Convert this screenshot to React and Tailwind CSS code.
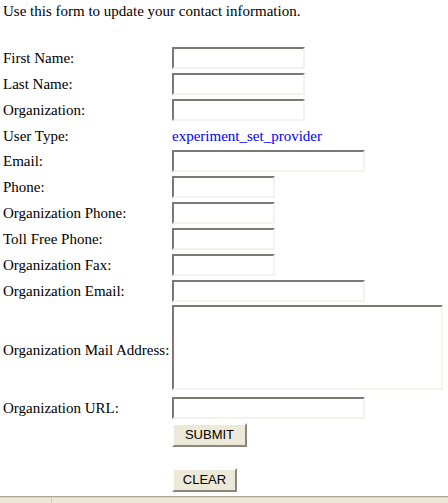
const ROWS = [
  { label: "First Name:", w: "w-[133px]" },
  { label: "Last Name:", w: "w-[133px]" },
  { label: "Organization:", w: "w-[133px]" },
  { label: "User Type:", text: "experiment_set_provider" },
  { label: "Email:", w: "w-[193px]" },
  { label: "Phone:", w: "w-[103px]" },
  { label: "Organization Phone:", w: "w-[103px]" },
  { label: "Toll Free Phone:", w: "w-[103px]" },
  { label: "Organization Fax:", w: "w-[103px]" },
  { label: "Organization Email:", w: "w-[193px]" },
];

const inset =
  "border-2 border-t-[#7b7a72] border-l-[#7b7a72] border-b-[#f3f2ec] border-r-[#f3f2ec] bg-white outline-none";

const btn =
  "h-[24px] border-2 border-t-white border-l-white border-b-[#8a887c] border-r-[#8a887c] bg-[#ece9d8] text-[13px] text-black font-['Liberation_Sans',Arial,sans-serif]";

function Row({ label, children, h = "h-[26px]" }) {
  return (
    <div className={`flex items-center ${h}`}>
      <div className="w-[169px] shrink-0">{label}</div>
      {children}
    </div>
  );
}

export default function App() {
  return (
    <div className="flex h-[503px] w-[448px] flex-col overflow-hidden bg-white font-['Liberation_Serif','Times_New_Roman',serif] text-[15px] leading-[18px] text-black">
      <div className="px-[3px] pt-[2px]">
        <p>Use this form to update your contact information.</p>

        <form className="mt-[25px]" onSubmit={(e) => e.preventDefault()}>
          {ROWS.map((r) =>
            r.text ? (
              <Row key={r.label} label={r.label} h="h-[25px]">
                <span className="text-[#0000ff]">{r.text}</span>
              </Row>
            ) : (
              <Row key={r.label} label={r.label}>
                <input type="text" className={`h-[22px] ${r.w} ${inset}`} />
              </Row>
            )
          )}

          <Row label="Organization Mail Address:" h="h-[91px]">
            <textarea className={`mb-[4px] h-[85px] w-[271px] resize-none ${inset}`} />
          </Row>

          <Row label="Organization URL:">
            <input type="text" className={`h-[22px] w-[193px] ${inset}`} />
          </Row>

          <Row label="" h="h-[28px]">
            <button type="submit" className={`w-[75px] ${btn}`}>
              SUBMIT
            </button>
          </Row>

          <div className="h-[19px]" />

          <Row label="" h="h-[24px]">
            <button type="reset" className={`h-[23px] w-[65px] ${btn}`}>
              CLEAR
            </button>
          </Row>
        </form>
      </div>

      <div className="mt-auto flex h-[7px] flex-col">
        <div className="h-px bg-[#aca899]" />
        <div className="h-px bg-[#d8d5c6]" />
        <div className="flex flex-1 bg-[#ece9d8]">
          <div className="w-[52px] border-r border-[#cfccbd]" />
        </div>
      </div>
    </div>
  );
}
